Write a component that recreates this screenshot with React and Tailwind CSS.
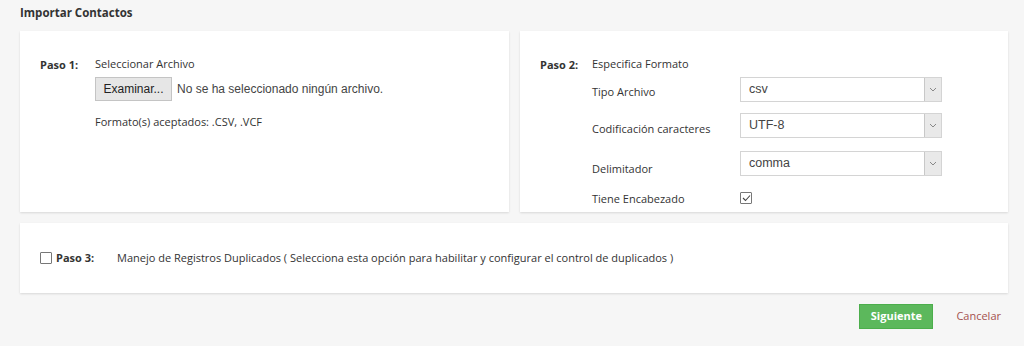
import { useState } from 'react'

const font = { fontFamily: '"Open Sans", "Noto Sans", sans-serif' }

const Select = ({ value }) => (
    <div className="flex h-[25px] w-[202px] border border-[#d4d4d4] bg-white">
        <div className="flex-1 flex items-center pl-[8px] text-[12.5px] text-[#444] font-['Liberation_Sans',Arial,sans-serif]">{value}</div>
        <div className="w-[17px] flex items-center justify-center bg-[#e9e9e9] border-l border-[#c8c8c8]">
            <svg width="8" height="5" viewBox="0 0 8 5"><path d="M1 1l3 3 3-3" fill="none" stroke="#888" strokeWidth="1" /></svg>
        </div>
    </div>
)

const Check = ({ checked }) => (
    <div className="size-[12px] border border-[#777] bg-white flex items-center justify-center rounded-[1px]">
        {checked && (
            <svg width="9" height="8" viewBox="0 0 9 8"><path d="M1 4l2.5 2.5L8 1.5" fill="none" stroke="#444" strokeWidth="1.1" /></svg>
        )}
    </div>
)

const App = () => {
    const [dup, setDup] = useState(false)

    return (
        <div className="w-[1024px] h-[346px] bg-[#f6f6f6] text-[11px] text-[#333] overflow-hidden" style={font}>
            <div className="pl-[20px] pr-[16px] pt-[5px]">
                <h1 className="text-[11.5px] font-bold text-[#333] h-[26px] leading-[16px]">Importar Contactos</h1>

                <div className="flex gap-[11px]">
                    {/* Paso 1 */}
                    <div className="w-[489px] h-[181px] bg-white shadow-[0_1px_2px_rgba(0,0,0,0.12)] pl-[20px] pt-[26px]">
                        <div className="flex">
                            <span className="w-[55px] font-bold">Paso 1:</span>
                            <div>
                                <p className="leading-[14px]">Seleccionar Archivo</p>
                                <div className="flex items-center mt-[6px] font-['Liberation_Sans',Arial,sans-serif] text-[12px]">
                                    <button className="h-[24px] w-[77px] bg-[#e6e6e6] border border-[#c4c4c4] text-[#222]">Examinar...</button>
                                    <span className="ml-[5px] text-[#444]">No se ha seleccionado ningún archivo.</span>
                                </div>
                                <p className="mt-[14px] leading-[14px]">Formato(s) aceptados: .CSV, .VCF</p>
                            </div>
                        </div>
                    </div>

                    {/* Paso 2 */}
                    <div className="w-[488px] h-[181px] bg-white shadow-[0_1px_2px_rgba(0,0,0,0.12)] pl-[20px] pt-[26px]">
                        <div className="flex">
                            <span className="w-[52px] font-bold">Paso 2:</span>
                            <div>
                                <p className="leading-[14px]">Especifica Formato</p>
                                <div className="flex items-center mt-[6px]">
                                    <span className="w-[148px] pt-[6px]">Tipo Archivo</span>
                                    <Select value="csv" />
                                </div>
                                <div className="flex items-center mt-[11px]">
                                    <span className="w-[148px] pt-[7px]">Codificación caracteres</span>
                                    <Select value="UTF-8" />
                                </div>
                                <div className="flex items-center mt-[12px]">
                                    <span className="w-[148px] pt-[11px]">Delimitador</span>
                                    <Select value="comma" />
                                </div>
                                <div className="flex items-center mt-[11px]">
                                    <span className="w-[148px] pt-[2px]">Tiene Encabezado</span>
                                    <Check checked />
                                </div>
                            </div>
                        </div>
                    </div>
                </div>

                {/* Paso 3 */}
                <div className="mt-[11px] h-[70px] bg-white shadow-[0_1px_2px_rgba(0,0,0,0.12)] pl-[20px] flex items-center">
                    <button onClick={() => setDup(!dup)} className="mr-[4px]"><Check checked={dup} /></button>
                    <span className="w-[61px] font-bold">Paso 3:</span>
                    <span>Manejo de Registros Duplicados ( Selecciona esta opción para habilitar y configurar el control de duplicados )</span>
                </div>

                <div className="flex justify-end items-center mt-[11px] pr-[7px]">
                    <button className="h-[25px] w-[74px] bg-[#5cb85c] border border-[#4cae4c] text-white font-bold text-[11px]">Siguiente</button>
                    <span className="ml-[23px] text-[#a5524f]">Cancelar</span>
                </div>
            </div>
        </div>
    )
}

export default App
